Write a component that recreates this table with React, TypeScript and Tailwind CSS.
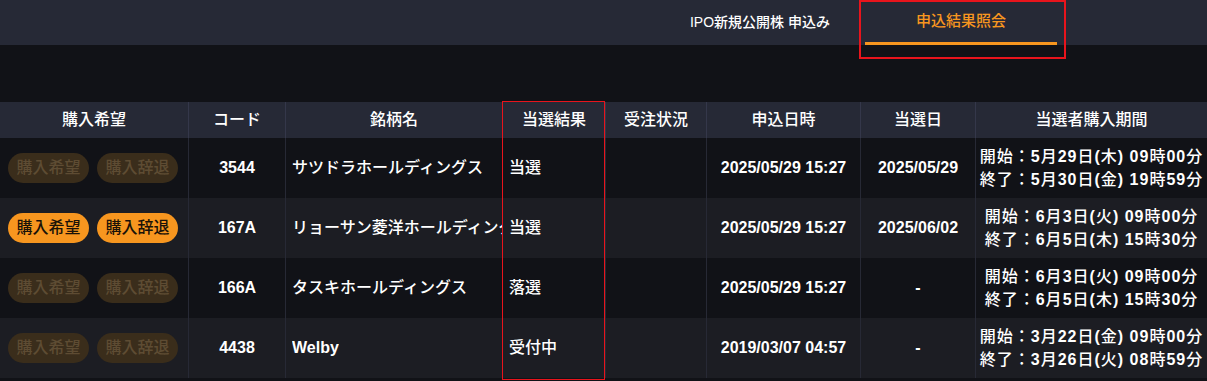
import React from 'react'

interface Row {
  active: boolean
  code: string
  name: string
  result: string
  status: string
  appliedAt: string
  wonAt: string
  start: string
  end: string
}

const ROWS: Row[] = [
  {
    active: false,
    code: '3544',
    name: 'サツドラホールディングス',
    result: '当選',
    status: '',
    appliedAt: '2025/05/29 15:27',
    wonAt: '2025/05/29',
    start: '開始：5月29日(木) 09時00分',
    end: '終了：5月30日(金) 19時59分',
  },
  {
    active: true,
    code: '167A',
    name: 'リョーサン菱洋ホールディングス',
    result: '当選',
    status: '',
    appliedAt: '2025/05/29 15:27',
    wonAt: '2025/06/02',
    start: '開始：6月3日(火) 09時00分',
    end: '終了：6月5日(木) 15時30分',
  },
  {
    active: false,
    code: '166A',
    name: 'タスキホールディングス',
    result: '落選',
    status: '',
    appliedAt: '2025/05/29 15:27',
    wonAt: '-',
    start: '開始：6月3日(火) 09時00分',
    end: '終了：6月5日(木) 15時30分',
  },
  {
    active: false,
    code: '4438',
    name: 'Welby',
    result: '受付中',
    status: '',
    appliedAt: '2019/03/07 04:57',
    wonAt: '-',
    start: '開始：3月22日(金) 09時00分',
    end: '終了：3月26日(火) 08時59分',
  },
]

// column widths, left to right
const COLS = ['w-[188px]', 'w-[97px]', 'w-[217px]', 'w-[103px]', 'w-[101px]', 'w-[154px]', 'w-[115px]', 'w-[232px]']
const HEADERS = ['購入希望', 'コード', '銘柄名', '当選結果', '受注状況', '申込日時', '当選日', '当選者購入期間']

// digits / latin runs a bit heavier than the kanji, like the original font
function Mixed({ text }: { text: string }) {
  const parts = text.split(/([0-9A-Za-z()\/: ]+)/).filter(Boolean)
  return (
    <span>
      {parts.map((p, i) =>
        /^[0-9A-Za-z()\/: ]+$/.test(p) ? (
          <span key={i} className="font-bold">{p}</span>
        ) : (
          <span key={i}>{p}</span>
        )
      )}
    </span>
  )
}

function PillButton({ label, active }: { label: string; active: boolean }) {
  return (
    <button
      type="button"
      className={`h-[30px] w-[81px] rounded-full text-[16px] ${
        active ? 'bg-[#f7961f] text-[#1a1208]' : 'bg-[#3a2d1b] text-[#5e4c33]'
      }`}
    >
      {label}
    </button>
  )
}

export default function App() {
  return (
    <div
      className="relative min-h-screen w-[1207px] bg-[#111217] text-white"
      style={{ fontFamily: '"Liberation Sans", "Noto Sans CJK JP", sans-serif' }}
    >
      {/* Tabs */}
      <header className="h-[45px] bg-[#262936] flex justify-end pr-[150px]">
        <div className="flex items-stretch">
          <div className="flex items-center px-[12px] text-[14px] font-medium">IPO新規公開株 申込み</div>
          <div className="flex items-center justify-center w-[192px] ml-[23px] text-[15px] font-medium text-[#f7961f] border-b-[3px] border-[#f7961f]">
            申込結果照会
          </div>
        </div>
      </header>

      <div className="h-[57px]" />

      {/* Table */}
      <div className="text-[16px] font-medium">
        <div className="flex h-[36px] bg-[#262936]">
          {HEADERS.map((h, i) => (
            <div
              key={h}
              className={`${COLS[i]} shrink-0 flex items-center justify-center ${i > 0 ? 'border-l border-[#34374a]' : ''}`}
            >
              {h}
            </div>
          ))}
        </div>

        {ROWS.map((r, idx) => (
          <div key={r.code} className={`flex h-[60px] ${idx % 2 === 0 ? 'bg-[#111217]' : 'bg-[#1c1d23]'}`}>
            <div className={`${COLS[0]} shrink-0 flex items-center gap-[8px] pl-[8px]`}>
              <PillButton label="購入希望" active={r.active} />
              <PillButton label="購入辞退" active={r.active} />
            </div>
            <div className={`${COLS[1]} shrink-0 flex items-center justify-center border-l border-[#272935] font-bold`}>{r.code}</div>
            <div className={`${COLS[2]} shrink-0 flex items-center pl-[6px] border-l border-[#272935] overflow-hidden`}>
              <span className="block whitespace-nowrap overflow-hidden">
                <Mixed text={r.name} />
              </span>
            </div>
            <div className={`${COLS[3]} shrink-0 flex items-center pl-[6px] border-l border-[#272935]`}>{r.result}</div>
            <div className={`${COLS[4]} shrink-0 flex items-center justify-center border-l border-[#272935]`}>{r.status}</div>
            <div className={`${COLS[5]} shrink-0 flex items-center justify-center border-l border-[#272935] font-bold`}>{r.appliedAt}</div>
            <div className={`${COLS[6]} shrink-0 flex items-center justify-center border-l border-[#272935] font-bold`}>{r.wonAt}</div>
            <div className={`${COLS[7]} shrink-0 flex flex-col items-center justify-center border-l border-[#272935] leading-[23px] tracking-[1px]`}>
              <Mixed text={r.start} />
              <Mixed text={r.end} />
            </div>
          </div>
        ))}
      </div>

      {/* red highlight marks */}
      <div className="absolute left-[859px] top-0 w-[207px] h-[59px] border-2 border-[#e8141c] pointer-events-none" />
      <div className="absolute left-[502px] top-[101px] w-[103px] h-[279px] border-[1.5px] border-[#e8141c] pointer-events-none" />
    </div>
  )
}
